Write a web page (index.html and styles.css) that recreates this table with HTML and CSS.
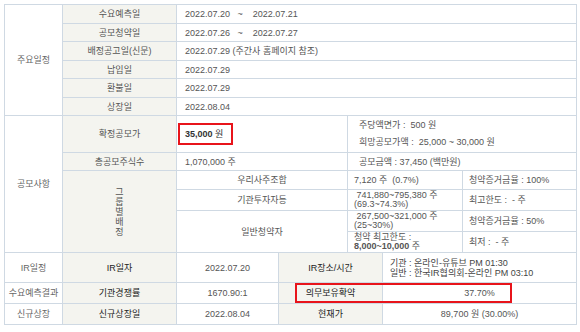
FILE: index.html
```html
<!DOCTYPE html>
<html lang="ko">
<head>
<meta charset="utf-8">
<link rel="stylesheet" href="styles.css">
</head>
<body>
<div class="wrap">
<table class="ipo">
  <colgroup>
    <col class="ca"><col class="cb"><col class="cc"><col class="cd"><col class="ce"><col class="cf"><col class="cg">
  </colgroup>
  <tbody>
    <tr class="h19">
      <td class="sec" rowspan="6">주요일정</td>
      <th class="hd">수요예측일</th>
      <td class="val" colspan="5">2022.07.20 &nbsp;&nbsp;~ &nbsp;&nbsp;&nbsp;2022.07.21</td>
    </tr>
    <tr class="h18">
      <th class="hd">공모청약일</th>
      <td class="val" colspan="5">2022.07.26 &nbsp;&nbsp;~ &nbsp;&nbsp;&nbsp;2022.07.27</td>
    </tr>
    <tr class="h19">
      <th class="hd">배정공고일(신문)</th>
      <td class="val" colspan="5">2022.07.29 (주간사 홈페이지 참조)</td>
    </tr>
    <tr class="h18">
      <th class="hd">납입일</th>
      <td class="val" colspan="5">2022.07.29</td>
    </tr>
    <tr class="h19">
      <th class="hd">환불일</th>
      <td class="val" colspan="5">2022.07.29</td>
    </tr>
    <tr class="h18">
      <th class="hd">상장일</th>
      <td class="val" colspan="5">2022.08.04</td>
    </tr>

    <tr class="h37">
      <td class="sec" rowspan="6">공모사항</td>
      <th class="hd">확정공모가</th>
      <td class="val tight" colspan="2"><span class="mark"><b>35,000</b> 원</span></td>
      <td class="val wide" colspan="3">
        <div class="line">주당액면가 : &nbsp;500 원</div>
        <div class="line">희망공모가액 : &nbsp;25,000 ~ 30,000 원</div>
      </td>
    </tr>
    <tr class="h18">
      <th class="hd">총공모주식수</th>
      <td class="val" colspan="2">1,070,000 주</td>
      <td class="val wide" colspan="3">공모금액 : 37,450 (백만원)</td>
    </tr>
    <tr class="h19">
      <th class="hd vert" rowspan="4">그<br>룹<br>별<br>배<br>정</th>
      <td class="cat" colspan="2">우리사주조합</td>
      <td class="val sm" colspan="2">7,120 주 &nbsp;(0.7%)</td>
      <td class="val sm">청약증거금율 : 100%</td>
    </tr>
    <tr class="h21">
      <td class="cat" colspan="2">기관투자자등</td>
      <td class="val sm two" colspan="2">&nbsp;741,880~795,380 주<br>(69.3~74.3%)</td>
      <td class="val sm">최고한도 : &nbsp;- 주</td>
    </tr>
    <tr class="h21">
      <td class="cat" colspan="2" rowspan="2">일반청약자</td>
      <td class="val sm two" colspan="2">&nbsp;267,500~321,000 주<br>(25~30%)</td>
      <td class="val sm">청약증거금율 : 50%</td>
    </tr>
    <tr class="h21">
      <td class="val sm two" colspan="2">청약 최고한도 :<br><b>8,000~10,000</b> 주</td>
      <td class="val sm">최저 : &nbsp;- 주</td>
    </tr>

    <tr class="h30">
      <td class="sec">IR일정</td>
      <th class="hd dark">IR일자</th>
      <td class="val ctr">2022.07.20</td>
      <th class="hd dark" colspan="2">IR장소/시간</th>
      <td class="val ir two" colspan="2">기관 : 온라인-유튜브 PM 01:30<br>일반 : 한국IR협의회-온라인 PM 03:10</td>
    </tr>
    <tr class="h21">
      <td class="sec">수요예측결과</td>
      <th class="hd dark">기관경쟁률</th>
      <td class="val ctr">1670.90:1</td>
      <th class="hd dark" colspan="2">의무보유확약</th>
      <td class="val ctr" colspan="2">37.70%</td>
    </tr>
    <tr class="h21">
      <td class="sec">신규상장</td>
      <th class="hd dark">신규상장일</th>
      <td class="val ctr">2022.08.04</td>
      <th class="hd dark" colspan="2">현재가</th>
      <td class="val ctr" colspan="2">89,700 원 (30.00%)</td>
    </tr>
  </tbody>
</table>
<div class="callout"></div>
</div>
</body>
</html>
```

FILE: styles.css
```css
html, body {
  margin: 0;
  padding: 0;
  background: #ffffff;
}

.wrap {
  position: relative;
  padding: 4px 0 0 4px;
  font-family: "Liberation Sans", "Noto Sans CJK KR", sans-serif;
  font-size: 9px;
  color: #555555;
}

.ipo {
  border-collapse: collapse;
  table-layout: fixed;
  width: 573px;
}

.ca { width: 58px; }
.cb { width: 114px; }
.cc { width: 102px; }
.cd { width: 69px; }
.ce { width: 35px; }
.cf { width: 80px; }
.cg { width: 114px; }

.ipo td, .ipo th {
  border: 1px solid #cfd9e3;
  padding: 0;
  line-height: 10px;
  font-weight: normal;
  vertical-align: middle;
  overflow: hidden;
  white-space: nowrap;
}

.h18 { height: 18px; }
.h19 { height: 19px; }
.h21 { height: 21px; }
.h30 { height: 30px; }
.h37 { height: 37px; }

.sec {
  background: #ffffff;
  text-align: center;
  color: #666666;
}

.hd {
  background: #f4f4ef;
  text-align: center;
  color: #555555;
}

.hd.dark {
  color: #222222;
}

.vert {
  line-height: 9.5px;
}

.val {
  background: #ffffff;
  text-align: left;
  padding-left: 8px !important;
}

.val.tight {
  padding-left: 1px !important;
}

.val.wide {
  padding-left: 11px !important;
}

.val.sm {
  padding-left: 6px !important;
}

.val.two {
  line-height: 9px;
}

.val.ir {
  padding-left: 7px !important;
  color: #444444;
  line-height: 10px;
}

.val.ctr {
  text-align: center;
  padding-left: 0 !important;
}

.line {
  height: 17px;
  line-height: 17px;
}

.cat {
  background: #ffffff;
  text-align: center;
}

.mark {
  display: inline-block;
  border: 2px solid #e8141b;
  padding: 4px 8px 4px 5px;
  line-height: 10px;
  color: #333333;
}

.mark b {
  font-weight: bold;
}

.callout {
  position: absolute;
  left: 295px;
  top: 283px;
  width: 213px;
  height: 16px;
  border: 2px solid #e8141b;
}
```
